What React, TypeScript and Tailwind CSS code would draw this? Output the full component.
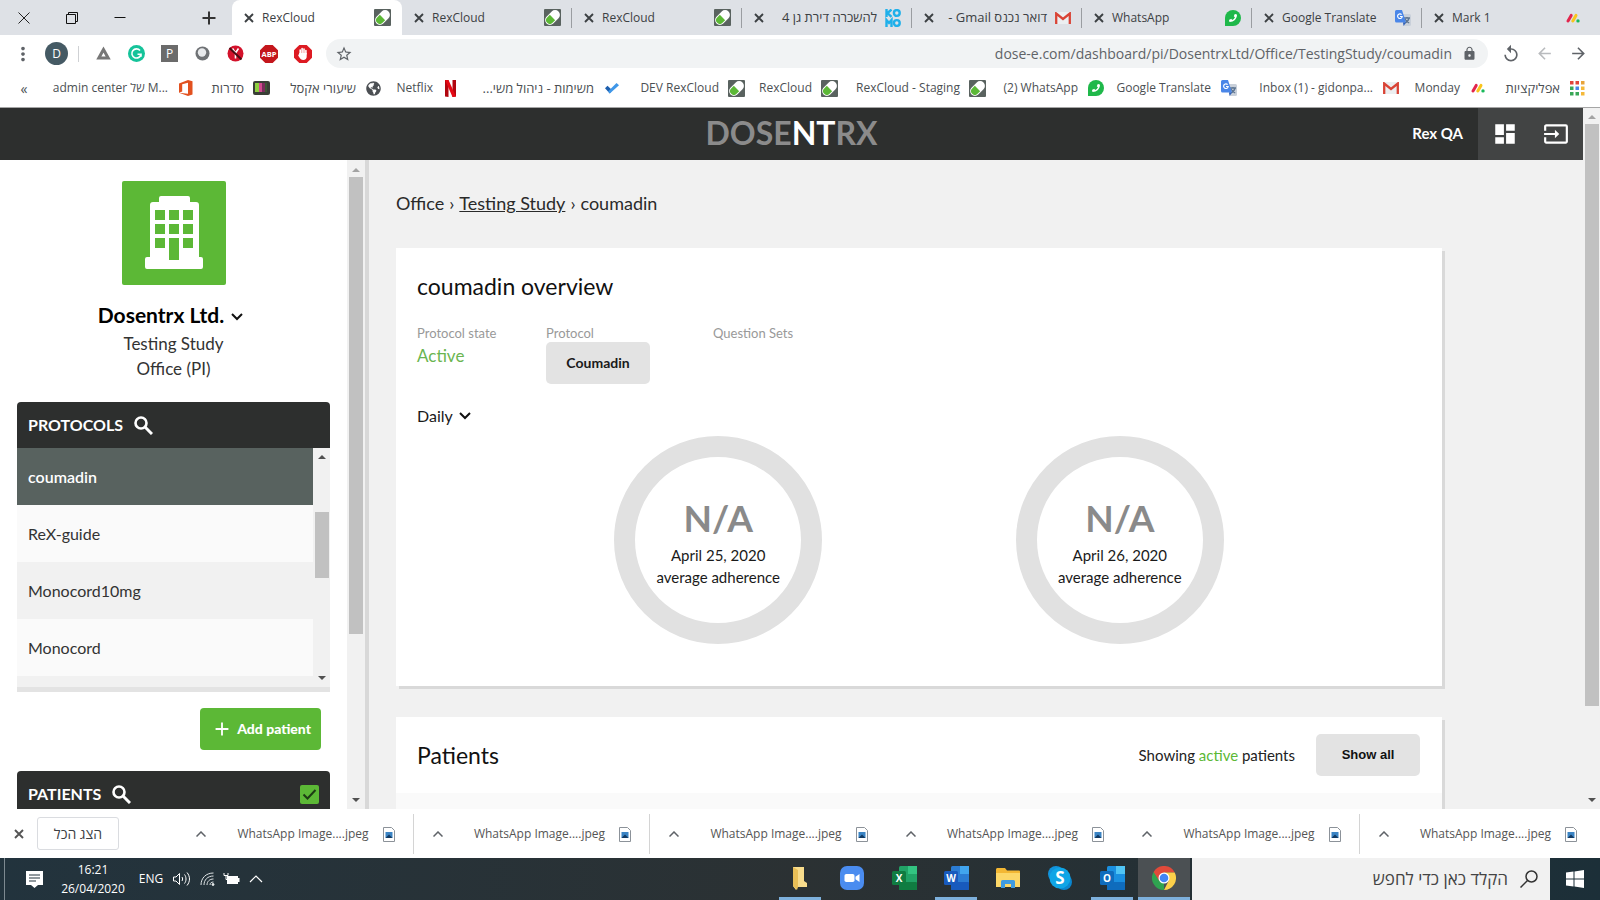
import React from "react";
import {
  MdAdd,
  MdArrowBack,
  MdArrowForward,
  MdDashboard,
  MdInput,
  MdLock,
  MdMoreVert,
  MdReplay,
  MdStarBorder,
} from "react-icons/md";
import { FaGlobeAmericas, FaPhoneAlt } from "react-icons/fa";

const CloseIcon = () => (
  <svg width="14" height="14" viewBox="0 0 14 14" stroke="currentColor" strokeWidth="1.900">
    <path d="m3 3 8 8m0-8-8 8" />
  </svg>
);

const SearchIcon = () => (
  <svg width="19" height="19" viewBox="0 0 19 19" fill="none" stroke="currentColor" strokeWidth="2.600">
    <circle cx="7" cy="7" r="5.500" />
    <path d="m11 11 7 7" strokeWidth="3" />
  </svg>
);

const PillIcon = () => (
  <svg width="17" height="17" viewBox="0 0 17 17" className="shrink-0">
    <rect width="17" height="17" rx="1" fill="#59625f" />
    <g transform="rotate(-45 8.5 8.5)">
      <rect x="0" y="3.700" width="17" height="9.600" rx="4.800" fill="#fff" />
      <path d="M8.500 4.700H4.800a3.800 3.800 0 0 0 0 7.600h3.700z" fill="#5cb836" />
    </g>
  </svg>
);

const WhatsAppIcon = () => (
  <span className="flex size-4 shrink-0 items-center justify-center rounded-full rounded-bl-xs bg-[#1fb84a] text-white">
    <FaPhoneAlt size={8} className="-scale-x-100" />
  </span>
);

const MondayIcon = () => (
  <svg width="16" height="16" viewBox="0 0 16 16" className="shrink-0">
    <path d="M3 11 6.2 5.4" stroke="#e2264d" strokeWidth="3" strokeLinecap="round" />
    <path d="M7.8 11 11 5.4" stroke="#f9c51d" strokeWidth="3" strokeLinecap="round" />
    <circle cx="13" cy="10.9" r="1.7" fill="#18b95a" />
  </svg>
);

const TranslateIcon = () => (
  <svg width="16" height="16" viewBox="0 0 16 16" className="shrink-0">
    <path d="M6 4h8.5A1.5 1.5 0 0 1 16 5.500v9a1.500 1.500 0 0 1-1.500 1.500H9z" fill="#c9d0da" />
    <path d="M9 8h6M12 7v1m2 0c-.5 2.500-2 4-4 5m0-4c.8 1.800 2.200 3.200 4.200 4" stroke="#5d7591" strokeWidth="1.300" fill="none" />
    <path d="M1.500 0H7l4 12.500H1.500A1.500 1.500 0 0 1 0 11V1.500A1.500 1.500 0 0 1 1.500 0z" fill="#4a86e8" />
    <path d="M8 12.500h3L8.600 16z" fill="#2f5fb8" />
    <path d="M6.600 4.600a2.300 2.300 0 1 0 .6 1.900H5" stroke="#fff" strokeWidth="1.200" fill="none" />
  </svg>
);

const GmailIcon = () => (
  <svg width="16" height="12" viewBox="0 0 16 12" className="shrink-0">
    <rect width="16" height="12" rx="1" fill="#eceff1" />
    <path d="M1.200 12V1.500L8 7l6.800-5.500V12" fill="none" stroke="#d94436" strokeWidth="2.300" />
  </svg>
);

const AppsIcon = () => {
  const colors = ["#e0443a", "#e0443a", "#e8a33a", "#3aa757", "#4a86e8", "#f5b93a", "#3aa757", "#3aa757", "#f5b93a"];
  return (
    <svg width="15" height="15" viewBox="0 0 15 15" className="shrink-0">
      {colors.map((c, i) => (
        <rect key={i} x={(i % 3) * 5.5} y={Math.floor(i / 3) * 5.5} width="3.500" height="3.500" fill={c} />
      ))}
    </svg>
  );
};

const OfficeIcon = () => (
  <svg width="14" height="16" viewBox="0 0 14 16" className="shrink-0">
    <path d="M0 3.500 9 0l4.500 1.300v13.200L9 16 0 12.800 9 13.800V2.800L3.200 4.200v7.200L0 12.800z" fill="#e2511f" />
  </svg>
);

const TvIcon = () => (
  <svg width="17" height="16" viewBox="0 0 17 16" className="shrink-0">
    <rect y="1" width="17" height="14" rx="2" fill="#3a3f36" />
    <path d="M2 3h4v9H2z" fill="#8fcf3f" />
    <path d="M6 3h3v9H6z" fill="#d24a8e" />
    <path d="M9 3h3v9H9z" fill="#7a2d5c" />
    <path d="M12 3h2v9h-2z" fill="#3d5a34" />
  </svg>
);

const NetflixIcon = () => (
  <svg width="11" height="17" viewBox="0 0 11 17" className="shrink-0">
    <path d="M0 0h3.500v17L0 16.500zM7.500 0H11v16.500l-3.500.5z" fill="#b1060f" />
    <path d="M0 0h3.500L11 16.500 7.500 17z" fill="#e50914" />
  </svg>
);

const TodoIcon = () => (
  <svg width="14" height="11" viewBox="0 0 14 11" className="shrink-0">
    <path d="M0 5.200 2.500 2.800 7 7 4.800 10.500z" fill="#1d5fae" />
    <path d="M4.800 10.500 14 2.200 11.500 0 3 8.500z" fill="#3f97e8" />
  </svg>
);

const KomoIcon = () => (
  <svg width="16" height="18" viewBox="0 0 16 18" fill="none" stroke="#1fb0ea" strokeWidth="2.400" className="shrink-0">
    <path d="M1.500 0v8M6.500.5 2.500 4l4 3.800" />
    <circle cx="11.800" cy="4" r="2.900" />
    <path d="M1.500 18v-7l2.500 3 2.500-3v7" />
    <circle cx="11.800" cy="14" r="2.900" />
  </svg>
);

const tabs = [
  { text: "RexCloud", icon: <PillIcon />, active: true },
  { text: "RexCloud", icon: <PillIcon /> },
  { text: "RexCloud", icon: <PillIcon /> },
  { text: "להשכרה דירת גן 4", icon: <KomoIcon />, rtl: true },
  { text: "דואר נכנס Gmail -", icon: <GmailIcon />, rtl: true },
  { text: "WhatsApp", icon: <WhatsAppIcon /> },
  { text: "Google Translate", icon: <TranslateIcon /> },
  { text: "Mark 1", icon: <MondayIcon /> },
];

const bookmarks = [
  { text: "admin center של M...", icon: <OfficeIcon />, width: "w-[159px]" },
  { text: "סדרות", icon: <TvIcon />, width: "w-[76px] text-[13px]" },
  { text: "שיעורי אקסל", icon: <FaGlobeAmericas size={15} className="shrink-0" />, width: "w-[112px] text-[13px]" },
  { text: "Netflix", icon: <NetflixIcon />, width: "w-[77px]" },
  { text: "משימות - ניהול משי...", icon: <TodoIcon />, width: "w-[161px] text-[13px]", rtl: true },
  { text: "DEV RexCloud", icon: <PillIcon />, width: "w-[125px]" },
  { text: "RexCloud", icon: <PillIcon />, width: "w-[93px]" },
  { text: "RexCloud - Staging", icon: <PillIcon />, width: "w-[148px]" },
  { text: "(2) WhatsApp", icon: <WhatsAppIcon />, width: "w-[118px]" },
  { text: "Google Translate", icon: <TranslateIcon />, width: "w-[133px]" },
  { text: "Inbox (1) - gidonpa...", icon: <GmailIcon />, width: "w-[162px]" },
  { text: "Monday", icon: <MondayIcon />, width: "w-[87px]" },
  { text: "אפליקציות", icon: <AppsIcon />, width: "w-[100px] text-[13px]" },
];

function TabStrip() {
  return (
    <div className="flex h-[35px] shrink-0 items-stretch bg-[#dee1e6] pr-2 text-[#3c4043]">
      <div className="flex w-[232px] shrink-0 items-center">
        <button aria-label="Close window" className="flex w-12 justify-center">
          <svg width="12" height="12" viewBox="0 0 12 12" stroke="#222" fill="none"><path d="m.5.5 11 11m0-11-11 11" /></svg>
        </button>
        <button aria-label="Restore window" className="flex w-12 justify-center">
          <svg width="12" height="12" viewBox="0 0 12 12" stroke="#111" fill="none"><path d="M.5 2.500h9v9h-9zM2.500 2.500v-2h9v9h-2" /></svg>
        </button>
        <button aria-label="Minimize window" className="flex w-12 justify-center">
          <svg width="12" height="12" viewBox="0 0 12 12" stroke="#111"><path d="M.5 5.500h11" /></svg>
        </button>
        <button aria-label="New tab" className="ml-auto mr-4 flex">
          <svg width="14" height="14" viewBox="0 0 14 14" stroke="#333" strokeWidth="2"><path d="M7 .5v13M.5 7h13" /></svg>
        </button>
      </div>
      {tabs.map((t, i) => (
        <div
          key={i}
          className={
            t.active
              ? "flex min-w-0 flex-1 items-center rounded-t-lg bg-white pl-[10px] pr-[11px]"
              : "flex min-w-0 flex-1 items-center pl-[10px] pr-[11px]"
          }
        >
          <button aria-label="Close tab" className="shrink-0"><CloseIcon /></button>
          <button
            dir={t.rtl ? "rtl" : "ltr"}
            className={
              t.rtl
                ? "ml-1 mr-2 min-w-0 flex-1 whitespace-nowrap text-right text-[13px]"
                : "ml-[6px] mr-2 min-w-0 flex-1 whitespace-nowrap text-left text-xs"
            }
          >
            {t.text}
          </button>
          {t.icon}
          {i > 0 && i < 7 && <span className="-mr-[11px] ml-[10px] h-5 w-px bg-[#9a9da1]" />}
        </div>
      ))}
    </div>
  );
}

function Toolbar() {
  return (
    <div className="flex h-[37px] shrink-0 items-center bg-white pr-3 text-[#5f6368]">
      <button aria-label="Menu" className="ml-3 shrink-0"><MdMoreVert size={22} /></button>
      <button className="ml-[11px] flex size-[23px] shrink-0 items-center justify-center rounded-full bg-[#455a64] text-xs text-white">D</button>
      <span className="ml-[10px] h-4 w-px bg-[#cfd1d4]" />
      <div className="ml-4 flex shrink-0 items-center gap-4">
        <svg width="17" height="17" viewBox="0 0 17 17"><path d="M8.500 4.500 3.800 13h9.400z" fill="none" stroke="#777" strokeWidth="3" /></svg>
        <svg width="17" height="17" viewBox="0 0 17 17">
          <circle cx="8.500" cy="8.500" r="8.500" fill="#15c39a" />
          <path d="M12 5.500a4.600 4.600 0 1 0 1 3.700H9.500m3.500 0v2.600" fill="none" stroke="#fff" strokeWidth="1.600" />
        </svg>
        <span className="flex size-[17px] items-center justify-center bg-[#6b6b6b] text-xs text-white">P</span>
        <svg width="17" height="17" viewBox="0 0 17 17">
          <circle cx="8.500" cy="8.500" r="7" fill="#6f7275" />
          <circle cx="8" cy="7.500" r="4.200" fill="#e8eaec" />
        </svg>
        <svg width="17" height="17" viewBox="0 0 17 17">
          <circle cx="8.500" cy="8.500" r="8" fill="#d3122b" />
          <path d="M5.500 3.500 8.500 8v5.500M11.500 3.500 8.500 8" stroke="#fff" strokeWidth="1.600" fill="none" />
          <path d="m2.500 3 12 11.500" stroke="#4a0d12" strokeWidth="2" />
        </svg>
        <svg width="18" height="18" viewBox="0 0 18 18">
          <path d="M5.300 0h7.400L18 5.300v7.400L12.700 18H5.300L0 12.700V5.300z" fill="#c4161c" />
          <text x="9" y="11.800" textAnchor="middle" fontSize="7.500" fontWeight="700" fill="#fff">ABP</text>
        </svg>
        <svg width="18" height="18" viewBox="0 0 18 18">
          <path d="M5.300 0h7.400L18 5.300v7.400L12.700 18H5.300L0 12.700V5.300z" fill="#dd1a22" />
          <path d="M6.200 9V5m1.900 4V3.500M10 9V4m1.900 5V5.500" stroke="#fff" strokeWidth="1.600" strokeLinecap="round" />
          <path d="M5.400 8h7.300v3.500c0 2-1.300 3.500-3.300 3.500C7 15 6 13.500 4.200 10.500z" fill="#fff" />
        </svg>
      </div>
      <div className="ml-[14px] flex h-[29px] min-w-0 flex-1 items-center rounded-full bg-[#f1f3f4] pl-[9px] pr-[11px]">
        <button aria-label="Bookmark this page"><MdStarBorder size={18} /></button>
        <input
          aria-label="Address"
          dir="ltr"
          defaultValue="dose-e.com/dashboard/pi/DosentrxLtd/Office/TestingStudy/coumadin"
          className="min-w-0 flex-1 bg-transparent px-[10px] text-right text-sm outline-none"
        />
        <MdLock size={15} className="shrink-0" />
      </div>
      <button aria-label="Reload" className="ml-[13px]"><MdReplay size={20} /></button>
      <button aria-label="Forward" className="ml-[14px] text-[#b9bbbe]"><MdArrowBack size={19} /></button>
      <button aria-label="Back" className="ml-[15px]"><MdArrowForward size={19} /></button>
    </div>
  );
}

function Bookmarks() {
  return (
    <nav className="flex h-[35px] shrink-0 items-center bg-white pb-[2px] pr-[14px] text-xs text-[#4b4f53]">
      <button className="w-12 text-center text-sm leading-4">«</button>
      <div className="flex min-w-0 flex-1 items-center justify-end">
        {bookmarks.map((b, i) => (
          <a key={i} href="#" className={`flex shrink-0 items-center justify-end gap-[9px] whitespace-nowrap ${b.width}`}>
            <span dir={b.rtl ? "rtl" : "ltr"}>{b.text}</span>
            <span className="flex w-[17px] justify-center">{b.icon}</span>
          </a>
        ))}
      </div>
    </nav>
  );
}

const Arrow = ({ up, dim }: { up?: boolean; dim?: boolean }) => (
  <svg width="8" height="4" viewBox="0 0 8 4" className="shrink-0">
    <path d={up ? "M0 4 4 0l4 4z" : "M0 0h8L4 4z"} fill={dim ? "#a3a3a3" : "#505050"} />
  </svg>
);

const Chevron = () => (
  <svg width="12" height="8" viewBox="0 0 12 8" fill="none" stroke="#111" strokeWidth="2" className="pointer-events-none shrink-0">
    <path d="m1 1 5 5 5-5" />
  </svg>
);

function Sidebar() {
  const protocols = ["ReX-guide", "Monocord10mg", "Monocord"];
  return (
    <aside className="flex shrink-0 border-r-4 border-[#d8d8d8]">
      <div className="flex w-[347px] flex-col overflow-hidden bg-white pl-[17px] pr-[17px] pt-[21px]">
        <div className="flex size-[104px] shrink-0 items-center justify-center self-center rounded-xs bg-[#5cb836]">
          <svg width="58" height="74" viewBox="0 0 58 74">
            <path d="M14 2a2 2 0 0 1 2-2h27a2 2 0 0 1 2 2v4h6a3 3 0 0 1 3 3v52h2a2 2 0 0 1 2 2v8a2 2 0 0 1-2 2H2a2 2 0 0 1-2-2v-8a2 2 0 0 1 2-2h3V9a3 3 0 0 1 3-3h6z" fill="#fff" />
            <path d="M10 14h10v10H10zm14 0h10v10H24zm14 0h10v10H38zM10 28h10v10H10zm14 0h10v10H24zm14 0h10v10H38zM10 42h10v10H10zm14 0h10v22H24zm14 0h10v10H38z" fill="#5cb836" />
          </svg>
        </div>
        <button className="mt-[17px] flex h-[26px] shrink-0 items-center justify-center gap-[7px] whitespace-nowrap pr-[6px] text-[21px] font-bold text-black">
          Dosentrx Ltd.
          <span className="mt-1"><Chevron /></span>
        </button>
        <p className="mt-[3px] shrink-0 text-center text-[17px] leading-[25px] text-[#333]">
          Testing Study
          <br />
          Office (PI)
        </p>
        <section className="mt-[21px] w-full shrink-0">
          <h2 className="flex h-[46px] items-center gap-[11px] rounded-t-[4px] bg-[#2d2f2e] pl-[11px] text-base font-bold text-white">
            PROTOCOLS
            <button aria-label="Search protocols"><SearchIcon /></button>
          </h2>
          <div className="flex h-[244px] border-b-[5px] border-[#e3e3e3] bg-[#f1f1f1]">
            <ul className="flex-1 overflow-hidden text-base text-[#333]">
              <li><a href="#" className="flex h-[57px] items-center bg-[#58625f] pl-[11px] font-semibold text-white">coumadin</a></li>
              {protocols.map((p, i) => (
                <li key={p}>
                  <a href="#" className={i === 1 ? "flex h-[57px] items-center bg-[#f1f1f1] pl-[11px]" : "flex h-[57px] items-center bg-[#fafafa] pl-[11px]"}>
                    {p}
                  </a>
                </li>
              ))}
            </ul>
            <div className="flex w-[17px] flex-col items-center justify-between py-[7px]">
              <Arrow up />
              <span className="-mt-[46px] h-[66px] w-[14px] bg-[#c1c1c1]" />
              <Arrow />
            </div>
          </div>
        </section>
        <button className="mr-[9px] mt-4 flex h-[42px] shrink-0 items-center gap-1 self-end rounded-[4px] bg-[#5cb836] pl-[11px] pr-[10px] text-sm font-black text-white">
          <MdAdd size={22} />
          Add patient
        </button>
        <section className="mt-[21px] w-full shrink-0">
          <h2 className="flex h-[46px] items-center gap-[11px] rounded-t-[4px] bg-[#2d2f2e] pl-[11px] pr-[11px] text-base font-bold text-white">
            PATIENTS
            <button aria-label="Search patients"><SearchIcon /></button>
            <label className="relative ml-auto flex size-[19px]">
              <input type="checkbox" defaultChecked aria-label="Active patients only" className="size-[19px] appearance-none rounded-xs bg-[#5cb836]" />
              <svg viewBox="0 0 19 19" className="pointer-events-none absolute inset-0" fill="none" stroke="#1d3b14" strokeWidth="2">
                <path d="m3.500 9.500 4 4 8-8.500" />
              </svg>
            </label>
          </h2>
        </section>
      </div>
      <div className="flex w-[18px] flex-col items-center bg-[#f1f1f1] pb-[7px] pt-2">
        <Arrow up dim />
        <span className="mt-[5px] h-[457px] w-[14px] bg-[#c1c1c1]" />
        <span className="mt-auto"><Arrow /></span>
      </div>
    </aside>
  );
}

function Adherence({ date }: { date: string }) {
  return (
    <div className="flex size-[208px] flex-col items-center justify-center justify-self-center rounded-full border-[21px] border-[#e1e1e1] text-center text-[15px] leading-[22px] text-[#1a1a1a]">
      <strong className="text-[37px] leading-[52px] text-[#8a8a8a]">N/A</strong>
      <span>{date}</span>
      <span>average adherence</span>
    </div>
  );
}

function Main() {
  return (
    <main className="min-w-0 flex-1 overflow-hidden bg-[#f1f1f1] pl-[27px] pr-[141px]">
      <nav className="flex h-[88px] items-center gap-[5px] pb-[2px] text-lg text-[#2a2a2a]">
        <span>Office</span>
        <span>›</span>
        <a href="#" className="underline">Testing Study</a>
        <span>›</span>
        <span>coumadin</span>
      </nav>
      <section className="h-[438px] bg-white px-[21px] pt-[22px] shadow-[3px_3px_0_#d9d9d9]">
        <h1 className="text-[23px] leading-8 text-[#111]">coumadin overview</h1>
        <div className="mt-[22px] flex text-[13px] leading-[18px] text-[#999]">
          <div className="w-[129px]">
            Protocol state
            <p className="mt-[2px] text-[17px] leading-6 text-[#6ab550]">Active</p>
          </div>
          <div className="w-[167px]">
            <p>Protocol</p>
            <button className="flex h-[42px] w-[104px] items-center justify-center rounded-[5px] bg-[#e3e3e3] text-sm font-bold text-[#1a1a1a]">Coumadin</button>
          </div>
          <div>Question Sets</div>
        </div>
        <label className="mt-5 flex h-6 w-fit items-center gap-[6px] text-base text-[#1a1a1a]">
          <select aria-label="Period" className="field-sizing-content appearance-none bg-transparent outline-none">
            <option>Daily</option>
          </select>
          <Chevron />
        </label>
        <div className="mx-auto mt-[8px] grid w-4/5 grid-cols-2">
          <Adherence date="April 25, 2020" />
          <Adherence date="April 26, 2020" />
        </div>
      </section>
      <section className="mt-[31px] bg-white shadow-[3px_3px_0_#d9d9d9]">
        <div className="flex h-[76px] items-center pl-[21px] pr-[22px]">
          <h2 className="mr-auto text-[23px] leading-8 text-[#111]">Patients</h2>
          <p className="mr-[21px] text-[15px] text-[#222]">
            Showing <span className="text-[#5cb836]">active</span> patients
          </p>
          <button className="h-[42px] w-[104px] rounded-[5px] bg-[#e3e3e3] font-['Liberation_Sans',sans-serif] text-[13px] font-bold text-[#111]">Show all</button>
        </div>
        <div className="h-14 bg-[#fafafa]" />
      </section>
    </main>
  );
}

const ImageFileIcon = () => (
  <svg width="12" height="15" viewBox="0 0 12 15" className="shrink-0">
    <path d="M.5.5h8l3 3v11H.5z" fill="#fff" stroke="#8c9299" />
    <rect x="2.500" y="5" width="7" height="6" fill="#3b84c4" />
    <path d="M2.500 11 6 7.500l3.500 3.500z" fill="#123a63" />
  </svg>
);

const CaretUp = () => (
  <svg width="10" height="6" viewBox="0 0 10 6" fill="none" stroke="#5f6368" strokeWidth="1.500">
    <path d="m.5 5.500 4.500-4.500 4.500 4.500" />
  </svg>
);

function Downloads() {
  return (
    <div className="flex h-[49px] shrink-0 items-center bg-white pr-1 text-[#555]">
      <button aria-label="Close downloads" className="ml-3 w-[25px]"><CloseIcon /></button>
      <button className="h-[33px] w-[82px] rounded-[3px] border border-[#dadce0] text-sm text-[#3c4043]">הצג הכל</button>
      <div className="ml-[58px] grid flex-1 grid-cols-6">
        {[0, 1, 2, 3, 4, 5].map((i) => (
          <div
            key={i}
            className={
              i === 0 || i === 1 || i === 4
                ? "flex h-10 items-center border-r border-[#d4d4d4] pl-[19px] pr-[18px] pt-px"
                : "flex h-10 items-center border-r border-transparent pl-[19px] pr-[18px] pt-px"
            }
          >
            <button aria-label="Download options"><CaretUp /></button>
            <button className="ml-auto flex items-center gap-[14px] whitespace-nowrap text-xs">
              WhatsApp Image....jpeg
              <ImageFileIcon />
            </button>
          </div>
        ))}
      </div>
    </div>
  );
}

const OfficeTile = ({ letter, dark, mid, light }: { letter: string; dark: string; mid: string; light: string }) => (
  <svg width="25" height="24" viewBox="0 0 25 24">
    <rect x="7" y="0" width="18" height="24" rx="1.500" fill={mid} />
    <rect x="16" y="0" width="9" height="8" fill={light} />
    <rect x="7" y="16" width="18" height="8" rx="1" fill={dark} />
    <rect x="0" y="5" width="14" height="14" rx="1.500" fill={dark} />
    <text x="7" y="15.500" textAnchor="middle" fontSize="10" fontWeight="700" fill="#fff">{letter}</text>
  </svg>
);

const taskApps = [
  {
    name: "Folder",
    running: true,
    icon: (
      <svg width="16" height="24" viewBox="0 0 16 24"><path d="M1 1h11v14l3 2v4H5l-1 3-3-4z" fill="#f8dc8c" /><path d="M1 1l5 3v17l-1 3-4-4z" fill="#e9bf57" /></svg>
    ),
  },
  {
    name: "Zoom",
    icon: (
      <svg width="24" height="24" viewBox="0 0 24 24"><rect width="24" height="24" rx="7" fill="#4a8cf0" /><rect x="4.500" y="8" width="10" height="8" rx="1.800" fill="#fff" /><path d="m15.500 10.800 4-2.800v8l-4-2.800z" fill="#fff" /></svg>
    ),
  },
  { name: "Excel", icon: <OfficeTile letter="X" dark="#107c41" mid="#21a366" light="#33c481" /> },
  { name: "Word", running: true, icon: <OfficeTile letter="W" dark="#185abd" mid="#2b7cd3" light="#41a5ee" /> },
  {
    name: "File Explorer",
    icon: (
      <svg width="24" height="20" viewBox="0 0 24 20"><path d="M0 1.500C0 .7.700 0 1.500 0H9l2 2.500h12a1 1 0 0 1 1 1V19H0z" fill="#f3b733" /><path d="M0 5h24v14H0z" fill="#fcd768" /><path d="M5 20v-6.500A1.500 1.500 0 0 1 6.500 12h11a1.500 1.500 0 0 1 1.500 1.500V20h-4v-4H9v4z" fill="#3f9be0" /></svg>
    ),
  },
  {
    name: "Skype",
    icon: (
      <svg width="24" height="24" viewBox="0 0 24 24"><circle cx="8" cy="8" r="8" fill="#1193dc" /><circle cx="16" cy="16" r="8" fill="#0a86cf" /><circle cx="12" cy="12" r="10.500" fill="#0fa5e6" /><text x="12" y="18" textAnchor="middle" fontSize="17" fontWeight="700" fill="#fff">S</text></svg>
    ),
  },
  { name: "Outlook", running: true, icon: <OfficeTile letter="O" dark="#0f6cbd" mid="#1a8fe0" light="#50c5f5" /> },
  {
    name: "Chrome",
    running: true,
    active: true,
    icon: (
      <svg width="24" height="24" viewBox="0 0 24 24">
        <path d="M12 12v12A12 12 0 0 1 1.600 6z" fill="#2fa350" />
        <path d="M12 6.500h10.700A12 12 0 0 0 1.600 6l5.400 8.500z" fill="#e04a3a" />
        <path d="M16.800 14.500 12 24A12 12 0 0 0 22.700 6.500H12z" fill="#fcd04a" />
        <circle cx="12" cy="12" r="5.500" fill="#fff" />
        <circle cx="12" cy="12" r="4.300" fill="#4285f4" />
      </svg>
    ),
  },
];

function Taskbar() {
  return (
    <footer className="flex h-[42px] shrink-0 items-stretch bg-linear-to-r from-[#22333d] via-[#2b3133] to-[#1c2f38] text-white">
      <div className="flex items-center">
        <span className="ml-1 h-full w-px bg-[#7d8990]" />
        <button aria-label="Notifications" className="ml-[21px]">
          <svg width="17" height="17" viewBox="0 0 17 17"><path d="M0 0h17v14h-5l-3.500 3L5 14H0z" fill="#fff" /><path d="M3 4h11M3 7h11M3 10h7" stroke="#22333d" strokeWidth="1.200" /></svg>
        </button>
        <div className="ml-[9px] w-[82px] text-center text-xs leading-[19px]">
          16:21
          <br />
          26/04/2020
        </div>
        <span className="ml-[3px] w-[28px] text-center text-xs">ENG</span>
        <svg width="18" height="14" viewBox="0 0 18 14" fill="none" stroke="#fff" className="ml-[8px]"><path d="M.5 5v4h2.500l3.500 3.500v-11L3 5zM9 5c.8 1.200.8 2.800 0 4m2.500-6.500c2 2.500 2 6.500 0 9M14 .5c3.300 3.800 3.300 9.200 0 13" /></svg>
        <svg width="15" height="14" viewBox="0 0 15 14" fill="none" stroke="#dfe4e6" className="ml-[9px]"><path d="M1 13C1 6 6 1 13.500 1M4 13c0-5 3.500-9 9.500-9M7 13c0-3.500 2.500-6 6.500-6M10 13c0-2 1.200-3 3.500-3" /><circle cx="13" cy="12.500" r="1" fill="#fff" /></svg>
        <svg width="17" height="12" viewBox="0 0 17 12" className="ml-[8px]"><path d="M4 3h11v2h1.500v4H15v2H4z" fill="#fff" /><path d="M1 0v2.500h4V0M3 2.500v4h2" stroke="#fff" fill="none" /></svg>
        <svg width="14" height="8" viewBox="0 0 14 8" fill="none" stroke="#fff" strokeWidth="1.200" className="ml-[9px]"><path d="m1 7 6-6 6 6" /></svg>
      </div>
      <div className="ml-auto mr-[2px] flex">
        {taskApps.map((a) => (
          <button
            key={a.name}
            aria-label={a.name}
            className={a.active ? "flex w-[52px] flex-col items-center bg-[#4b5053]" : "flex w-[52px] flex-col items-center"}
          >
            <span className="flex h-[39px] items-center">{a.icon}</span>
            {a.running && <span className={a.active ? "h-[3px] w-full bg-[#7db0dc]" : "h-[3px] w-[42px] bg-[#7db0dc]"} />}
          </button>
        ))}
      </div>
      <label className="flex w-[358px] items-center gap-3 bg-[#f1f1f1] pr-3 text-[#333]">
        <input dir="rtl" aria-label="חיפוש" placeholder="הקלד כאן כדי לחפש" className="min-w-0 flex-1 bg-transparent text-[17px] outline-none placeholder:text-[#444]" />
        <svg width="18" height="18" viewBox="0 0 18 18" fill="none" stroke="#333" strokeWidth="1.500"><circle cx="11.500" cy="6.500" r="5.500" /><path d="M7.500 10.500.5 17.500" /></svg>
      </label>
      <button aria-label="Start" className="flex w-[50px] items-center justify-center">
        <svg width="18" height="18" viewBox="0 0 18 18" fill="#fff"><path d="M0 2.600 7.500 1.600v6.900H0zM8.500 1.400 18 0v8.500H8.500zM0 9.500h7.500v6.900L0 15.400zM8.500 9.500H18V18l-9.500-1.400z" /></svg>
      </button>
    </footer>
  );
}

export default function App() {
  return (
    <div className="flex h-screen flex-col overflow-hidden font-['Open_Sans','Noto_Sans',sans-serif]">
      <TabStrip />
      <Toolbar />
      <Bookmarks />
      <div className="flex min-h-0 flex-1 border-t border-[#a5a5a5] font-['Lato',sans-serif]">
        <div className="flex min-w-0 flex-1 flex-col">
          <header className="grid h-[52px] shrink-0 grid-cols-[1fr_auto_1fr] items-center bg-[#2d2f2e]">
            <span />
            <div className="pb-[2px] text-[32px] font-bold leading-9 text-[#8b8b8b]">
              DOSE<span className="text-white">NT</span>RX
            </div>
            <div className="flex h-full items-center justify-end">
              <span className="mr-[15px] pb-[2px] text-[15px] font-bold text-white">Rex QA</span>
              <div className="flex h-full w-[105px] items-center justify-between bg-[#424444] pl-[14px] pr-[14px] text-white">
                <button aria-label="Dashboard"><MdDashboard size={26} /></button>
                <button aria-label="Log out"><MdInput size={26} /></button>
              </div>
            </div>
          </header>
          <div className="flex min-h-0 flex-1">
            <Sidebar />
            <Main />
          </div>
        </div>
        <div className="flex w-[17px] shrink-0 flex-col items-center bg-[#f1f1f1] pb-[7px] pt-[7px]">
          <Arrow up dim />
          <span className="mt-[5px] h-[582px] w-[14px] bg-[#c1c1c1]" />
          <span className="mt-auto"><Arrow /></span>
        </div>
      </div>
      <Downloads />
      <Taskbar />
    </div>
  );
}
